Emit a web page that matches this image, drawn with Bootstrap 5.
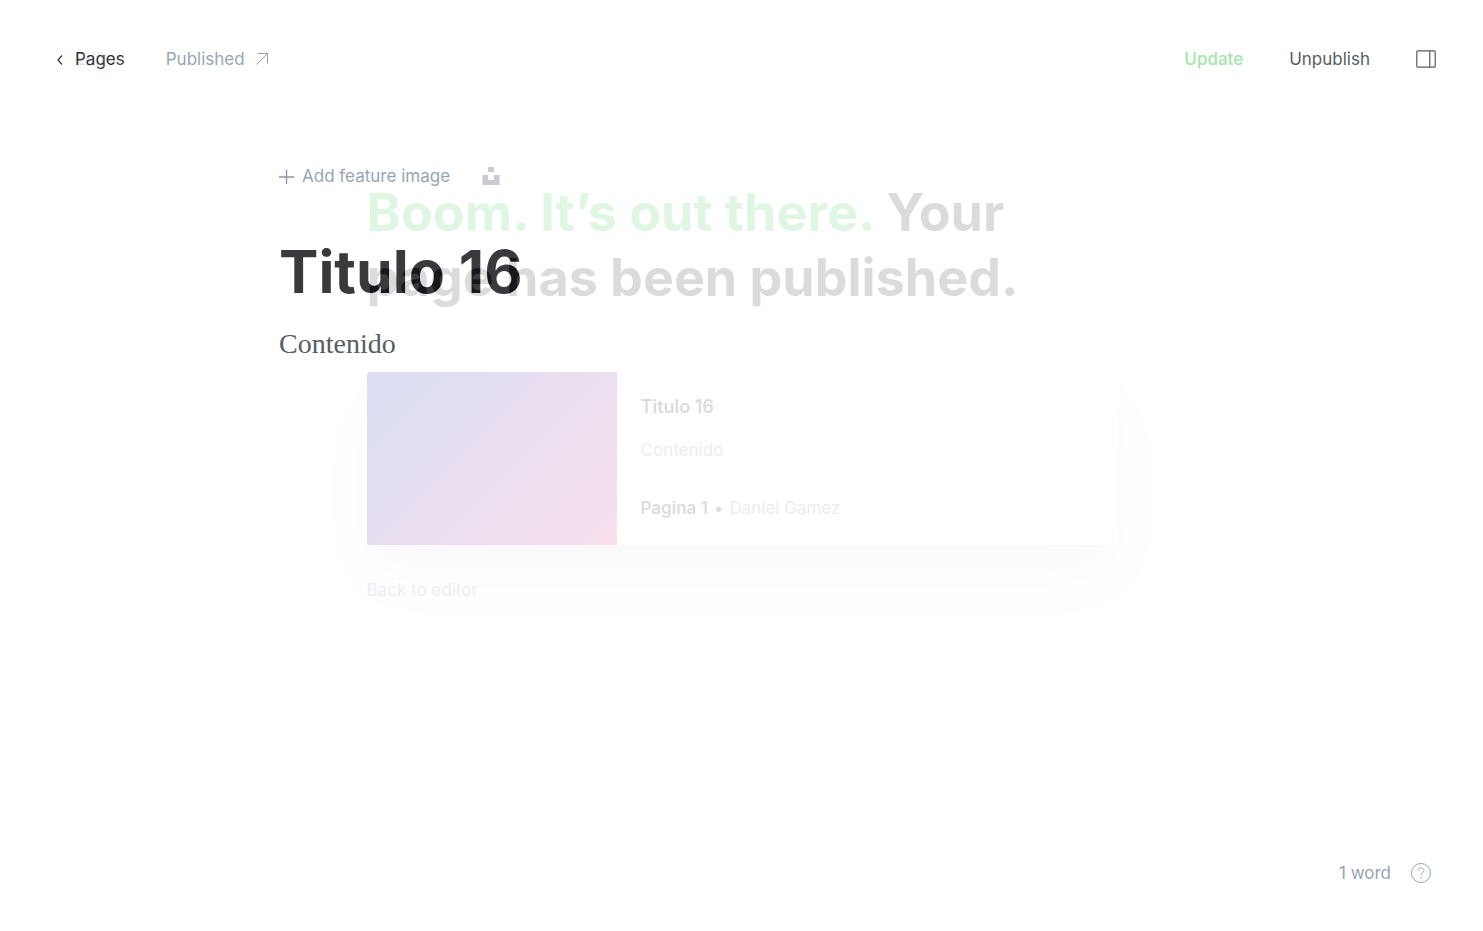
<!DOCTYPE html>
<html lang="en">
<head>
<meta charset="utf-8">
<meta name="viewport" content="width=device-width, initial-scale=1">
<title>Titulo 16 - Editor</title>
<link href="https://cdn.jsdelivr.net/npm/bootstrap@5.3.0/dist/css/bootstrap.min.css" rel="stylesheet">
<style>
body { font-family: Inter, "Liberation Sans", sans-serif; font-size: 17px; line-height: 24px; color: #394047; }
.bar { padding: 47px 47px 0 56px; }
.plain { border: 0; padding: 0; background: none; color: #394047; text-decoration: none; }
.dark { color: #23272c; }
.muted { color: #8496a8; }
.go { color: #95e09e; font-weight: 500; }
.actions { gap: 46px; }
.trail { gap: 41px; }
.trail a { gap: 11px; }
.canvas { width: 100%; max-width: 973px; padding: 93px 24px 0; }
.tools { gap: 32px; }
.tools button { gap: 8px; }
.headline { font-size: 59px; line-height: 72px; font-weight: 700; color: #15171a; margin: 48px 0 0; }
.prose { font-family: "Liberation Serif", serif; font-size: 28px; line-height: 40px; margin: 16px 0 0; }
.foot { padding: 0 52px 46px; gap: 20px; }
.veil { background: #fff; opacity: .15; }
.veil-bar { padding: 47px 0 0 75px; }
.notice { width: 100%; max-width: 798px; padding: 109px 24px 0; }
.notice h2 { font-size: 52px; line-height: 65px; font-weight: 700; color: #15171a; margin: 0 0 62px; }
.notice h2 span { color: #30cf43; }
.preview { border-radius: 3px; background: #fff; color: #15171a; box-shadow: 0 0 1px rgba(0,0,0,.1), 0 34px 60px -18px rgba(0,0,0,.14), 0 12px 26px -8px rgba(0,0,0,.08); }
.cover { flex: 0 0 33.34%; border-radius: 3px 0 0 3px; background: linear-gradient(135deg, #1f27b4 0%, #2b2bae 18%, #7d2c9c 55%, #b83297 88%, #ea3a7d 100%); }
.detail { padding: 23px 24px 25px; }
.detail h3 { font-size: 18px; line-height: 24px; font-weight: 600; margin: 0; }
.detail p { margin: 19px 0 34px; color: #7c8b9a; }
.pale { color: #7c8b9a; }
.byline { gap: 6px; }
.back { margin-top: 33px; color: #7c8b9a; }
</style>
</head>
<body>
<div class="d-flex flex-column min-vh-100">
  <header class="bar d-flex justify-content-between align-items-center">
    <nav class="trail d-flex align-items-center">
      <a href="#" class="plain dark d-flex align-items-center">
        <svg width="8" height="12" viewBox="0 0 8 12" fill="none" stroke="#15171a" stroke-width="1.300"><path d="M6 2.500 2 7l4 4.500"/></svg>
        Pages</a>
      <a href="#" class="plain muted d-flex align-items-center">Published
        <svg width="12" height="12" viewBox="0 0 12 12" fill="none" stroke="#8496a8" stroke-width="1"><path d="M.5 11.500 11.500.5M1.500.5h10v10"/></svg></a>
    </nav>
    <div class="actions d-flex align-items-center">
      <button type="button" class="plain go">Update</button>
      <button type="button" class="plain">Unpublish</button>
      <button type="button" class="plain d-flex" aria-label="Settings">
        <svg width="20" height="18" viewBox="0 0 20 18" fill="none" stroke="#394047" stroke-width="1.200"><rect x=".8" y=".8" width="18.400" height="16.400" rx="1"/><path d="M13.800 1v16"/></svg></button>
    </div>
  </header>

  <main class="canvas mx-auto flex-grow-1">
    <div class="tools d-flex align-items-center">
      <button type="button" class="plain muted d-flex align-items-center">
        <svg width="15" height="16" viewBox="0 0 15 16" fill="none" stroke="#738393" stroke-width="1.300"><path d="M7.500 1.500v15M0 9h15"/></svg>
        Add feature image</button>
      <button type="button" class="plain d-flex" aria-label="Unsplash">
        <svg width="18" height="18" viewBox="0 0 18 18" fill="#bfc3c9"><path d="M6 0h6v5H6zM.5 8H6v5h6V8h5.500v10H.5z"/></svg></button>
    </div>
    <h1 class="headline">Titulo 16</h1>
    <p class="prose">Contenido</p>
  </main>

  <footer class="foot d-flex justify-content-end align-items-center muted">
    <span>1 word</span>
    <a href="#" class="plain d-flex" aria-label="Help">
      <svg width="20" height="20" viewBox="0 0 20 20" fill="none" stroke="#8496a8" stroke-width="1"><circle cx="10" cy="10" r="9.500"/><path d="M7 7.800C7 6 8.200 5 10 5s3 1.100 3 2.600c0 2.200-3 2.200-3 4.400v.6"/><circle cx="10" cy="15" r=".5" fill="#8496a8" stroke-width=".5"/></svg></a>
  </footer>
</div>

<div class="veil position-absolute top-0 start-0 w-100 h-100">
  <div class="veil-bar"><a href="#" class="plain">Editor</a></div>
  <section class="notice mx-auto">
    <h2><span>Boom. It’s out there.</span> Your page has been published.</h2>
    <article class="preview d-flex">
      <div class="cover"></div>
      <div class="detail">
        <h3>Titulo 16</h3>
        <p>Contenido</p>
        <div class="byline d-flex"><span class="fw-semibold">Pagina 1</span><span>•</span><span class="pale">Daniel Gamez</span></div>
      </div>
    </article>
    <button type="button" class="plain back">Back to editor</button>
  </section>
</div>
<script src="https://cdn.jsdelivr.net/npm/bootstrap@5.3.0/dist/js/bootstrap.bundle.min.js"></script>
</body>
</html>
